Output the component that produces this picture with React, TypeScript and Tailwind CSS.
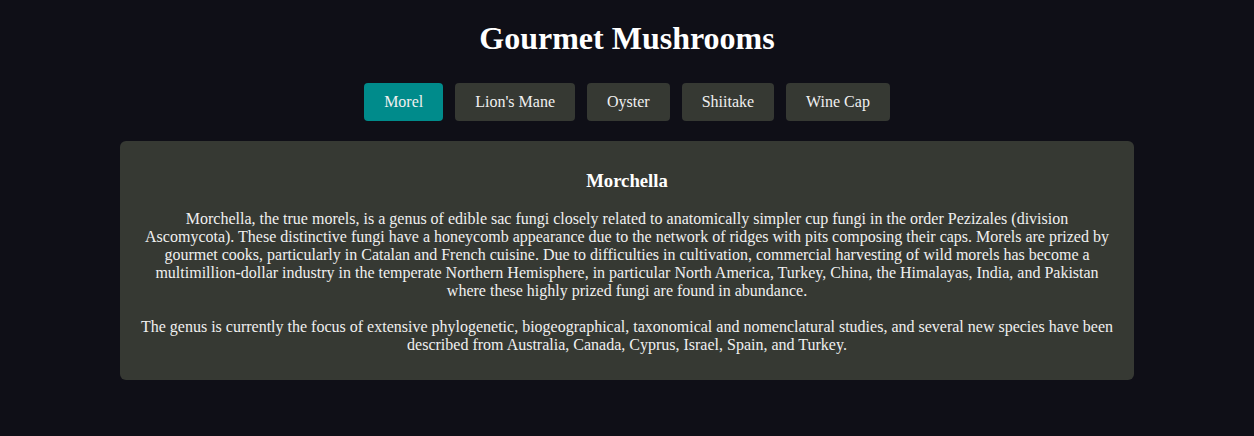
import React, { useState } from "react";

const tabs = ["Morel", "Lion's Mane", "Oyster", "Shiitake", "Wine Cap"];

export default function App() {
  const [active, setActive] = useState(0);
  return (
    <div
      className="min-h-[436px] w-full bg-[#0f0f17] text-white"
      style={{ fontFamily: '"Liberation Serif", "Times New Roman", serif' }}
    >
      <h1 className="pt-[20px] text-center text-[32px] font-bold leading-[37px]">
        Gourmet Mushrooms
      </h1>
      <div className="mt-[26px] flex justify-center gap-3">
        {tabs.map((t, i) => (
          <button
            key={t}
            onClick={() => setActive(i)}
            className={`rounded-[4px] px-5 py-[10px] text-[16px] leading-[18px] text-[#f0f0f0] ${
              i === active ? "bg-[#008b8b]" : "bg-[#363933]"
            }`}
          >
            {t}
          </button>
        ))}
      </div>
      <div className="mx-auto mt-5 w-[1014px] rounded-[6px] bg-[#363933] px-5 pt-[10px] pb-[8px] text-center text-[#f0f0f0]">
        <h3 className="my-[18.72px] text-[18.72px] font-bold leading-[21.5px] text-white">
          Morchella
        </h3>
        <p className="my-[18px] text-[16px] leading-[18px]">
          Morchella, the true morels, is a genus of edible sac fungi closely related to anatomically simpler cup fungi in the order Pezizales (division Ascomycota). These distinctive fungi have a honeycomb appearance due to the network of ridges with pits composing their caps. Morels are prized by gourmet cooks, particularly in Catalan and French cuisine. Due to difficulties in cultivation, commercial harvesting of wild morels has become a multimillion-dollar industry in the temperate Northern Hemisphere, in particular North America, Turkey, China, the Himalayas, India, and Pakistan where these highly prized fungi are found in abundance.
        </p>
        <p className="my-[18px] text-[16px] leading-[18px]">
          The genus is currently the focus of extensive phylogenetic, biogeographical, taxonomical and nomenclatural studies, and several new species have been described from Australia, Canada, Cyprus, Israel, Spain, and Turkey.
        </p>
      </div>
    </div>
  );
}
